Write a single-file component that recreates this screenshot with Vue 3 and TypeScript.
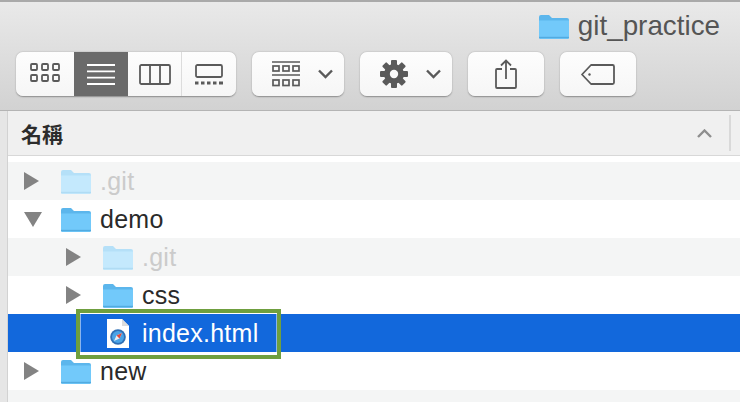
<script setup lang="ts">
type Row = { name: string; depth: number; kind: "folder" | "file"; arrow?: "right" | "down"; dim?: boolean; tone: "grey" | "white" | "selected" };

const rows: Row[] = [
  { name: ".git", depth: 0, kind: "folder", arrow: "right", dim: true, tone: "grey" },
  { name: "demo", depth: 0, kind: "folder", arrow: "down", tone: "white" },
  { name: ".git", depth: 1, kind: "folder", arrow: "right", dim: true, tone: "grey" },
  { name: "css", depth: 1, kind: "folder", arrow: "right", tone: "white" },
  { name: "index.html", depth: 1, kind: "file", tone: "selected" },
  { name: "new", depth: 0, kind: "folder", arrow: "right", tone: "white" },
];
</script>

<template>
  <div class="win">
    <div class="topline"></div>
    <header class="toolbar">
      <div class="title">
        <svg class="folder" width="30" height="25" viewBox="0 0 30 25">
          <path d="M0 3a2 2 0 0 1 2-2h8l3 3h15a2 2 0 0 1 2 2v17a2 2 0 0 1-2 2H2a2 2 0 0 1-2-2z" fill="#5cb6ec" />
          <path d="M0 6.500h30V23a2 2 0 0 1-2 2H2a2 2 0 0 1-2-2z" fill="#72c9fa" />
          <path d="M0 23.500h30" stroke="#52abe0" stroke-width="1.400" />
        </svg>
        <span>git_practice</span>
      </div>
      <div class="tools">
        <div class="btn seg">
          <div class="s s1">
            <svg width="30" height="22" viewBox="0 0 30 22" fill="none" stroke="#5a5a5a" stroke-width="1.800">
              <rect x="1" y="1" width="6" height="6" rx="1" /><rect x="12" y="1" width="6" height="6" rx="1" /><rect x="23" y="1" width="6" height="6" rx="1" />
              <rect x="1" y="12" width="6" height="6" rx="1" /><rect x="12" y="12" width="6" height="6" rx="1" /><rect x="23" y="12" width="6" height="6" rx="1" />
            </svg>
          </div>
          <div class="s s2 on">
            <svg width="28" height="21" viewBox="0 0 28 21" stroke="#fff" stroke-width="1.800">
              <path d="M0 1h28M0 7.300h28M0 13.600h28M0 20h28" />
            </svg>
          </div>
          <div class="s s3">
            <svg width="32" height="21" viewBox="0 0 32 21" fill="none" stroke="#5a5a5a" stroke-width="1.800">
              <rect x="1" y="1" width="30" height="19" rx="1.500" /><path d="M11 1v19M21 1v19" />
            </svg>
          </div>
          <div class="s s4">
            <svg width="28" height="21" viewBox="0 0 28 21" fill="none" stroke="#5a5a5a" stroke-width="1.800">
              <rect x="1" y="1" width="26" height="12" rx="1.500" />
              <path d="M0 19h3.500M6 19h3.500M12 19h3.500M18 19h3.500M24 19h4" stroke-width="3" />
            </svg>
          </div>
        </div>
        <div class="btn group">
          <svg width="28" height="26" viewBox="0 0 28 26" fill="none" stroke="#5a5a5a" stroke-width="1.700">
            <path d="M0 1h28M0 14h28" />
            <rect x="1" y="5" width="6" height="5" /><rect x="11" y="5" width="6" height="5" /><rect x="21" y="5" width="6" height="5" />
            <rect x="1" y="19" width="6" height="5.500" /><rect x="11" y="19" width="6" height="5.500" /><rect x="21" y="19" width="6" height="5.500" />
          </svg>
          <svg class="chev" width="15" height="10" viewBox="0 0 15 10" fill="none" stroke="#5a5a5a" stroke-width="2.400"><path d="M1 1.500l6.500 6.500 6.500-6.500" /></svg>
        </div>
        <div class="btn gear">
          <svg width="28" height="28" viewBox="0 0 28 28">
            <g fill="#5a5a5a">
              <circle cx="14" cy="14" r="10" />
              <rect x="11" y="0" width="6" height="28" rx="1" />
              <rect x="11" y="0" width="6" height="28" rx="1" transform="rotate(45 14 14)" />
              <rect x="11" y="0" width="6" height="28" rx="1" transform="rotate(90 14 14)" />
              <rect x="11" y="0" width="6" height="28" rx="1" transform="rotate(135 14 14)" />
            </g>
            <circle cx="14" cy="14" r="4.200" fill="#fbfbfb" />
          </svg>
          <svg class="chev" width="15" height="10" viewBox="0 0 15 10" fill="none" stroke="#5a5a5a" stroke-width="2.400"><path d="M1 1.500l6.500 6.500 6.500-6.500" /></svg>
        </div>
        <div class="btn share">
          <svg width="22" height="30" viewBox="0 0 22 30" fill="none" stroke="#5a5a5a" stroke-width="1.800">
            <path d="M7 10H2a1 1 0 0 0-1 1v17a1 1 0 0 0 1 1h18a1 1 0 0 0 1-1V11a1 1 0 0 0-1-1h-5" />
            <path d="M11 20V1.500M6 6.500l5-5 5 5" />
          </svg>
        </div>
        <div class="btn tag">
          <svg width="34" height="21" viewBox="0 0 34 21" fill="none" stroke="#5a5a5a" stroke-width="1.800">
            <path d="M10 1h21.500a1.500 1.500 0 0 1 1.500 1.500v16a1.500 1.500 0 0 1-1.500 1.500H10L1 10.500z" stroke-linejoin="round" />
            <circle cx="8.500" cy="10.500" r="1.200" fill="#5a5a5a" stroke="none" />
          </svg>
        </div>
      </div>
    </header>

    <div class="body">
      <div class="gutter"></div>
      <div class="main">
        <div class="head">
          <span class="head-name">名稱</span>
          <svg class="sort" width="15" height="9" viewBox="0 0 15 9" fill="none" stroke="#8e8e8e" stroke-width="2.400"><path d="M1 8l6.500-6.500L14 8" /></svg>
          <i class="head-sep"></i>
        </div>
        <div class="gap"></div>
        <div v-for="(r, i) in rows" :key="i" class="row" :class="[r.tone, { dim: r.dim, nested: r.depth > 0 }]">
          <span class="arrow-cell">
            <svg v-if="r.arrow === 'right'" width="15" height="18" viewBox="0 0 15 18"><path d="M0 0l15 9-15 9z" fill="#838383" /></svg>
            <svg v-else-if="r.arrow === 'down'" width="18" height="15" viewBox="0 0 18 15"><path d="M0 0h18l-9 15z" fill="#838383" /></svg>
          </span>
          <svg v-if="r.kind === 'folder'" class="ficon" width="30" height="25" viewBox="0 0 30 25">
            <path d="M0 3a2 2 0 0 1 2-2h8l3 3h15a2 2 0 0 1 2 2v17a2 2 0 0 1-2 2H2a2 2 0 0 1-2-2z" :fill="r.dim ? '#b5e0f8' : '#5cb6ec'" />
            <path d="M0 6.500h30V23a2 2 0 0 1-2 2H2a2 2 0 0 1-2-2z" :fill="r.dim ? '#c4e9fd' : '#72c9fa'" />
            <path d="M0 23.500h30" :stroke="r.dim ? '#b0dcf4' : '#52abe0'" stroke-width="1.400" />
          </svg>
          <svg v-else class="ficon file" width="22" height="29" viewBox="0 0 22 29">
            <path d="M0 0h15l7 7v22H0z" fill="#fff" />
            <path d="M15 0l7 7h-7z" fill="#dcdcdc" />
            <circle cx="11" cy="18" r="7.800" fill="#2f6fb5" />
            <circle cx="11" cy="18" r="6" fill="#4aa3e6" />
            <path d="M15 14l-5.500 2.500L7 22l5.500-2.500z" fill="#e9eef2" />
            <path d="M15 14l-5.500 2.500 3 3z" fill="#e0483c" />
          </svg>
          <span class="name">{{ r.name }}</span>
          <div v-if="r.tone === 'selected'" class="callout"></div>
        </div>
        <div class="row grey tail"></div>
      </div>
    </div>
  </div>
</template>

<style>
html, body { margin: 0; background: #fff; }
</style>

<style scoped>
.win {
  width: 740px;
  height: 402px;
  overflow: hidden;
  display: flex;
  flex-direction: column;
  font-family: "Liberation Sans", "Noto Sans CJK TC", sans-serif;
}
.topline {
  height: 2px;
  background: #a9a9a9;
}
.toolbar {
  height: 109px;
  box-sizing: border-box;
  border-bottom: 1px solid #b4b4b4;
  background: linear-gradient(#e9e9e9, #d2d2d2);
  display: flex;
  flex-direction: column;
}
.title {
  height: 50px;
  display: flex;
  justify-content: flex-end;
  align-items: center;
  gap: 9px;
  padding: 0 20px 2px 0;
  box-sizing: border-box;
  font-size: 27.800px;
  color: #555;
}
.tools {
  display: flex;
  gap: 16px;
  padding-left: 16px;
}
.btn {
  height: 44px;
  box-sizing: border-box;
  background: linear-gradient(#fdfdfd, #f6f6f6);
  border-radius: 7px;
  box-shadow: 0 0.5px 1.5px rgba(0, 0, 0, 0.35);
  display: flex;
  align-items: center;
  justify-content: center;
}
.seg {
  width: 220px;
  overflow: hidden;
  align-items: stretch;
}
.s {
  display: flex;
  align-items: center;
  justify-content: center;
}
.s1 { width: 58px; }
.s2 { width: 54px; }
.s3 { width: 53px; border-right: 1px solid #dcdcdc; box-sizing: content-box; }
.s4 { flex: 1; }
.on { background: #6a6a6a; }
.group { width: 92px; gap: 18px; padding-left: 9px; }
.gear { width: 92px; gap: 18px; padding-left: 9px; }
.share, .tag { width: 76px; }
.body {
  flex: 1;
  display: flex;
  min-height: 0;
}
.gutter {
  width: 7px;
  background: #e6e6e6;
  border-right: 1px solid #d2d2d2;
}
.main {
  flex: 1;
  min-width: 0;
}
.head {
  height: 45px;
  box-sizing: border-box;
  background: #f0f0f0;
  border-bottom: 1px solid #d8d8d8;
  display: flex;
  align-items: center;
  padding: 0 9px 0 13px;
}
.head-name {
  flex: 1;
  font-size: 21px;
  font-weight: 700;
  color: #2c2c2c;
}
.sort {
  margin-right: 17px;
}
.head-sep {
  width: 2px;
  height: 36px;
  background: #d9d9d9;
}
.gap {
  height: 6px;
}
.row {
  height: 38px;
  display: flex;
  align-items: center;
  position: relative;
  font-size: 25px;
  letter-spacing: 0.25px;
  color: #2a2a2a;
}
.grey { background: #f4f5f5; }
.white { background: #fff; }
.selected { background: #1268dc; color: #fff; z-index: 1; }
.arrow-cell {
  width: 53px;
  padding-left: 16px;
  box-sizing: border-box;
  display: flex;
  align-items: center;
}
.nested .arrow-cell {
  width: 95px;
  padding-left: 58px;
}
.ficon {
  flex: none;
}
.file {
  margin-left: 4px;
  margin-right: 4px;
}
.name {
  margin-left: 9px;
}
.dim .name { color: #cbcbcb; }
.callout {
  position: absolute;
  left: 68px;
  top: -5px;
  width: 205px;
  height: 50px;
  box-sizing: border-box;
  border: 4px solid #6f9f3f;
  box-shadow: inset 0 0 0 1px rgba(255, 255, 255, 0.5);
}
.tail {
  height: 12px;
}
</style>
